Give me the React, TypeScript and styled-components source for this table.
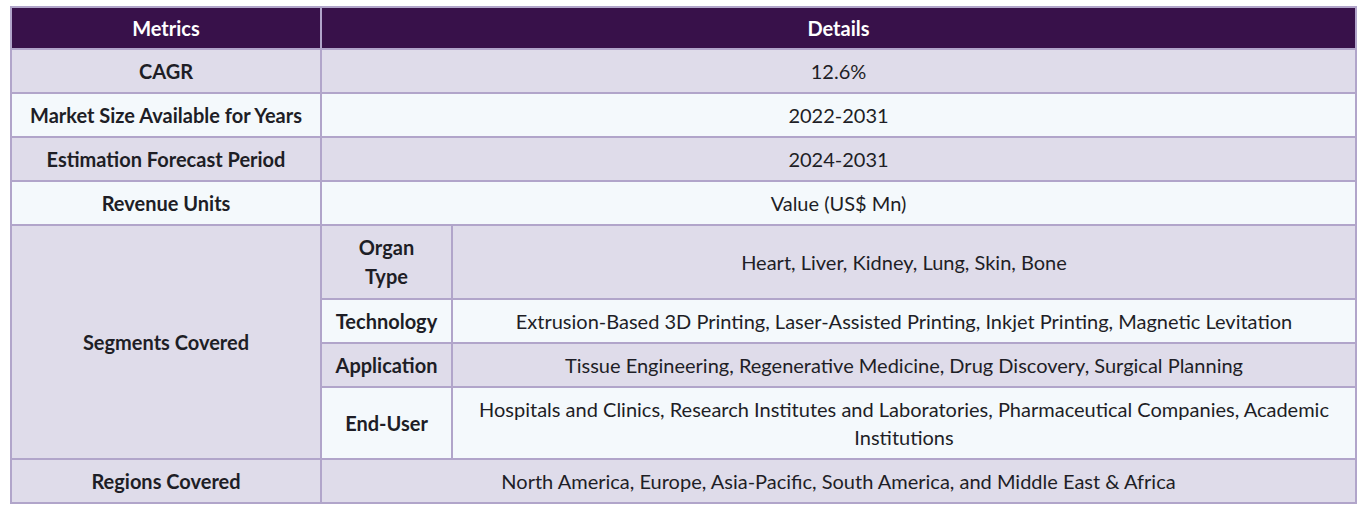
import { ReactElement } from "react";
import styled, { createGlobalStyle } from "styled-components";

const GlobalStyle = createGlobalStyle`
  body {
    margin: 0;
    background: #ffffff;
    font-family: Lato, "Noto Sans", sans-serif;
  }
`;

const PageDiv = styled.div`
  padding: 6px 9px 0 10px;
`;

const Table = styled.table`
  width: 1347px;
  border-collapse: collapse;
  table-layout: fixed;
  border: 2px solid #b1a5ca;
  font-size: 20px;
  line-height: 28px;
  color: #1e1e26;
`;

const HeadCell = styled.th`
  background: #38114a;
  color: #ffffff;
  font-weight: 700;
  height: 40px;
  padding: 0 15px;
  border: 2px solid #b1a5ca;
  text-align: center;
`;

interface RowProps {
  shade: boolean;
}

const Row = styled.tr<RowProps>`
  background: ${(props) => (props.shade ? "#dfdcea" : "#f4f9fc")};
`;

const LabelCell = styled.td`
  font-weight: 700;
  text-align: center;
  padding: 7px 12px;
  border: 2px solid #b1a5ca;
`;

const ValueCell = styled.td`
  text-align: center;
  padding: 7px 15px;
  border: 2px solid #b1a5ca;
`;

const SegmentsLabel = styled(LabelCell)`
  background: #dfdcea;
`;

const SubLabel = styled(LabelCell)<{ tall?: boolean }>`
  padding: ${(props) => (props.tall ? "7px 22px" : "7px 13px")};
  line-height: ${(props) => (props.tall ? "29px" : "28px")};
`;

const simpleRows = [
  { label: "CAGR", value: "12.6%" },
  { label: "Market Size Available for Years", value: "2022-2031" },
  { label: "Estimation Forecast Period", value: "2024-2031" },
  { label: "Revenue Units", value: "Value (US$ Mn)" },
];

const segments = [
  { label: "Organ Type", value: "Heart, Liver, Kidney, Lung, Skin, Bone", tall: true },
  {
    label: "Technology",
    value:
      "Extrusion-Based 3D Printing, Laser-Assisted Printing, Inkjet Printing, Magnetic Levitation",
  },
  {
    label: "Application",
    value:
      "Tissue Engineering, Regenerative Medicine, Drug Discovery, Surgical Planning",
  },
  {
    label: "End-User",
    value:
      "Hospitals and Clinics, Research Institutes and Laboratories, Pharmaceutical Companies, Academic Institutions",
  },
];

export default function App(): ReactElement {
  return (
    <PageDiv>
      <GlobalStyle />
      <Table>
        <colgroup>
          <col style={{ width: 310 }} />
          <col style={{ width: 131 }} />
          <col />
        </colgroup>
        <thead>
          <tr>
            <HeadCell>Metrics</HeadCell>
            <HeadCell colSpan={2}>Details</HeadCell>
          </tr>
        </thead>
        <tbody>
          {simpleRows.map((r, i) => (
            <Row key={r.label} shade={i % 2 === 0}>
              <LabelCell>{r.label}</LabelCell>
              <ValueCell colSpan={2}>{r.value}</ValueCell>
            </Row>
          ))}
          {segments.map((s, i) => (
            <Row key={s.label} shade={i % 2 === 0}>
              {i === 0 && (
                <SegmentsLabel rowSpan={segments.length}>
                  Segments Covered
                </SegmentsLabel>
              )}
              <SubLabel tall={s.tall}>{s.label}</SubLabel>
              <ValueCell>{s.value}</ValueCell>
            </Row>
          ))}
          <Row shade={true}>
            <LabelCell>Regions Covered</LabelCell>
            <ValueCell colSpan={2}>
              North America, Europe, Asia-Pacific, South America, and Middle
              East &amp; Africa
            </ValueCell>
          </Row>
        </tbody>
      </Table>
    </PageDiv>
  );
}
